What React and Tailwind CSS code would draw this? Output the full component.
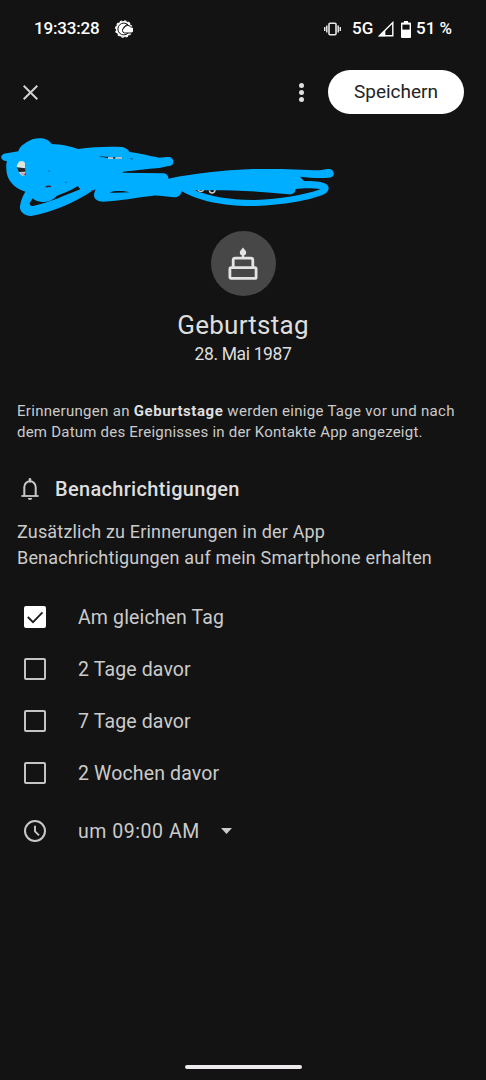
import { useState } from 'react';

const OPTIONS = [
  { id: 'same-day', label: 'Am gleichen Tag' },
  { id: 'two-days', label: '2 Tage davor' },
  { id: 'seven-days', label: '7 Tage davor' },
  { id: 'two-weeks', label: '2 Wochen davor' },
];

const WeatherIcon = () => (
  <svg className="ml-[15px] h-[18px] w-[18px]" viewBox="0 0 18 18" fill="none">
    <circle cx="8.8" cy="9" r="8" fill="#fff" />
    <circle cx="8.8" cy="9" r="8.2" stroke="#fff" strokeWidth="1.2" strokeDasharray="2.3 2" />
    <circle cx="8.8" cy="9" r="5.9" stroke="#131313" strokeWidth="1" />
    <path d="M12.500 4.200C9.500 5.500 8 8 8 10.500" stroke="#131313" strokeWidth="1" />
    <path
      d="M9.500 13a2.700 2.700 0 0 1-.2-5.200 3.700 3.700 0 0 1 6.300-1 3.100 3.100 0 0 1 .6 6.200Z"
      fill="#fff"
      stroke="#131313"
      strokeWidth="1"
    />
  </svg>
);

const VibrateIcon = () => (
  <svg className="h-[14px] w-[17px]" viewBox="0 0 17 14" fill="none" stroke="#e8e8e8">
    <rect x="5" y="1.3" width="7" height="11.4" rx="1" strokeWidth="1.6" />
    <path d="M2.8 3.5v7M14.2 3.5v7M.7 5v4M16.3 5v4" strokeWidth="1.5" />
  </svg>
);

const SignalIcon = () => (
  <svg className="ml-[4px] h-[16px] w-[16px]" viewBox="0 0 16 16">
    <path d="M1.5 14.7 14.8 1.6v13.1Z" fill="none" stroke="#fff" strokeWidth="1.4" />
    <path d="M.5 15.3 7.3 8.6v6.7Z" fill="#fff" />
  </svg>
);

const BatteryIcon = () => (
  <svg className="ml-[7px] h-[17px] w-[10px]" viewBox="0 0 10 17">
    <path d="M3 0h4v1.500h2a1 1 0 0 1 1 1V16a1 1 0 0 1-1 1H1a1 1 0 0 1-1-1V2.500a1 1 0 0 1 1-1h2Z" fill="#fff" />
    <path d="M1.4 3.6h7.2v5H1.4Z" fill="#131313" />
  </svg>
);

const CakeIcon = () => (
  <svg className="h-[34px] w-[30px]" viewBox="0 0 30 34" fill="none" stroke="#e3e3e3">
    <path d="M15 5v6" strokeWidth="2.4" />
    <path d="M15 .5c1.6 2 3.200 3.4 3.200 5a3.200 3 0 0 1-6.400 0c0-1.600 1.600-3 3.200-5Z" fill="#e3e3e3" stroke="none" />
    <path d="M5.200 20.500v-7.400a2 2 0 0 1 2-2h15.600a2 2 0 0 1 2 2v7.400" strokeWidth="2.800" />
    <rect x="1.900" y="20.700" width="26.200" height="10.700" rx="1.200" strokeWidth="2.800" />
  </svg>
);

const BellIcon = () => (
  <svg className="h-[22px] w-[18px]" viewBox="0 0 18 22" fill="none" stroke="#c8c8c8">
    <path d="M3.300 18V9a5.700 5.700 0 0 1 11.400 0v9" strokeWidth="2" />
    <path d="M.4 18h17.200" strokeWidth="1.800" />
    <path d="M9 1.300v2" strokeWidth="2.600" strokeLinecap="round" />
    <path d="M6.800 20h4.400a2.200 2 0 0 1-4.400 0Z" fill="#c8c8c8" stroke="none" />
  </svg>
);

const ClockIcon = () => (
  <svg className="h-6 w-6" viewBox="0 0 24 24" fill="none" stroke="#c8c8c8">
    <circle cx="12" cy="12" r="10" strokeWidth="2" />
    <path d="M12 6.800v5.600l4 4" strokeWidth="1.900" />
  </svg>
);

const Checkbox = ({ checked }) =>
  checked ? (
    <span className="flex h-[22px] w-[22px] items-center justify-center rounded-[2px] bg-white">
      <svg className="h-[22px] w-[22px]" viewBox="0 0 22 22" fill="none">
        <path d="m3.800 11 5.200 5.100L18.500 6.300" stroke="#1a1a1a" strokeWidth="1.800" />
      </svg>
    </span>
  ) : (
    <span className="h-[22px] w-[22px] rounded-[2px] border-2 border-[#c4c4c4]" />
  );

// Account row, hidden behind the marker strokes
const AccountRow = () => (
  <svg className="block h-[90px] w-[340px]" viewBox="0 0 1020 270">
    <g fill="#00aeff">
      <path d="M20 70 55 64C60 45 82 36 97 28C120 21 145 24 155 42C185 43 215 50 235 57C280 50 330 49 367 51C380 54 386 61 389 66C420 70 455 79 478 83L500 81C513 79 520 86 520 95C520 104 514 108 505 108L478 114C440 117 405 121 370 125L367 128L488 130C499 130 506 137 505 146C590 129 670 121 745 118C800 115 900 118 960 121L982 117C995 116 1001 122 1001 131C1001 139 995 143 986 143C955 145 930 143 900 140C904 144 910 149 911 153C940 152 966 154 978 162C990 169 988 184 974 192C930 211 850 225 765 228C680 230 595 214 546 184C541 197 535 202 522 202C500 201 480 196 460 197C410 202 355 213 310 215C293 215 284 208 282 198C282 190 284 183 288 178L277 182C225 216 160 246 93 258C70 257 58 243 60 228C63 210 69 196 76 185C38 174 18 145 19 115C18 106 19 99 21 94C8 92 2 86 4 79C7 73 13 71 20 70Z" />
    </g>
    <g fill="#131313">
      <path d="M98 205 89 219C89 228 95 229 102 227C150 218 196 195 241 178L233 168C215 181 190 190 171 197C158 211 144 216 126 216C113 215 104 212 98 205Z" />
      <path d="M329 188C345 181 370 183 389 187C367 188 347 189 329 188Z" />
      <path d="M584 181C680 179 770 183 865 193C879 195 885 188 887 177C910 174 945 174 961 178C910 196 840 207 765 210C690 211 625 198 584 181Z" />
    </g>
    <path d="M57 95C65 91 72 93 75 99V135L67 137C56 130 48 114 51 105Z" fill="#dce6df" />
    <path d="M50 112 76 115V125L56 126Z" fill="#262626" />
    <path d="M57 127 77 128V135L69 137Z" fill="#c5a7ac" />
    <path d="M72 133 78 130V136Z" fill="#900026" />
    <path d="M297 79 368 83 365 87 320 84Z" fill="#102838" />
    <path d="M324 84h15M346 84h20" stroke="#d8e5eb" strokeWidth="5" />
    <path d="m300 79 7 2M391 86l8 1M145 122l5 3M195 158l5-2" stroke="#145a7c" strokeWidth="3" />
    <path d="M137 171q9-4 16-1" stroke="#4b1420" strokeWidth="4" fill="none" />
    <path d="m271 183 10-3v4Z" fill="#b40022" />
    <path d="M594 181q9 7 17 0M628 181q1 8 9 8 8-1 8-9" stroke="#cfcfcf" strokeWidth="4" fill="none" />
  </svg>
);

const App = () => {
  const [selected, setSelected] = useState(['same-day']);

  const toggle = (id) => {
    setSelected((prev) =>
      prev.includes(id) ? prev.filter((item) => item !== id) : [...prev, id]
    );
  };

  return (
    <div className="flex h-[1080px] w-[486px] flex-col overflow-hidden bg-[#131313] font-[Roboto,sans-serif] text-[#dedede] whitespace-nowrap">
      {/* Status bar */}
      <div className="flex h-[58px] items-center pr-[35px] pl-[34px] text-[17px] font-medium text-white">
        <span className="w-[66px] tracking-[-0.01em]">19:33:28</span>
        <WeatherIcon />
        <div className="ml-auto flex items-center">
          <VibrateIcon />
          <span className="ml-[11px] w-[22px]">5G</span>
          <SignalIcon />
          <BatteryIcon />
          <span className="ml-[5px] w-[35px]">51 %</span>
        </div>
      </div>

      {/* Toolbar */}
      <div className="flex h-[72px] items-center pr-[22px] pl-[23px] pb-1">
        <button aria-label="Schließen">
          <svg className="h-[15px] w-[15px]" viewBox="0 0 15 15" stroke="#d0d0d0" strokeWidth="2">
            <path d="m.7.7 13.600 13.600M14.300.7.7 14.300" />
          </svg>
        </button>
        <button aria-label="Weitere Optionen" className="ml-auto flex flex-col gap-[2px]">
          <span className="h-[5px] w-[5px] rounded-full bg-[#dedede]" />
          <span className="h-[5px] w-[5px] rounded-full bg-[#dedede]" />
          <span className="h-[5px] w-[5px] rounded-full bg-[#dedede]" />
        </button>
        <button className="ml-6 h-11 w-[136px] rounded-full bg-white text-[19px] text-[#242424]">
          Speichern
        </button>
      </div>

      <AccountRow />

      {/* Event */}
      <div className="flex flex-col items-center pt-[11px]">
        <div className="flex h-[65px] w-[65px] items-center justify-center rounded-full bg-[#474747]">
          <CakeIcon />
        </div>
        <h1 className="mt-[13px] text-[26px] leading-8 tracking-[0.01em]">Geburtstag</h1>
        <p className="text-[17.500px] leading-[26px] tracking-[-0.02em]">28. Mai 1987</p>
      </div>

      <p className="mt-[34px] pl-[17px] text-[15px] leading-[20.500px] tracking-[0.015em] text-[#cbcbcb]">
        <span className="tracking-[0.020em]">
          Erinnerungen an <b className="font-bold tracking-[0.036em] text-[#dedede]">Geburtstage</b> werden einige Tage vor und nach
        </span>
        <br />
        dem Datum des Ereignisses in der Kontakte App angezeigt.
      </p>

      {/* Notifications */}
      <div className="mt-[33px] flex h-[28px] items-center pl-[21px]">
        <BellIcon />
        <h2 className="ml-4 text-[20px] font-medium tracking-[0.016em]">Benachrichtigungen</h2>
      </div>
      <p className="mt-4 pl-[17px] text-[18px] leading-[26px] tracking-[0.01em] text-[#cbcbcb]">
        Zusätzlich zu Erinnerungen in der App
        <br />
        Benachrichtigungen auf mein Smartphone erhalten
      </p>

      <div className="mt-5 flex flex-col">
        {OPTIONS.map((option) => (
          <button
            key={option.id}
            onClick={() => toggle(option.id)}
            className="flex h-[52px] items-center pl-6 text-[19.500px] text-[#cbcbcb]"
          >
            <Checkbox checked={selected.includes(option.id)} />
            <span className="ml-8 pt-px tracking-[0.007em]">{option.label}</span>
          </button>
        ))}
      </div>

      <button className="mt-[6px] flex h-[52px] items-center pl-[23px] text-[19.500px] text-[#cbcbcb]">
        <ClockIcon />
        <span className="ml-[31px] w-[122px] pt-px text-left tracking-[0.028em]">um 09:00 AM</span>
        <svg className="ml-[21px] h-[6px] w-[11px]" viewBox="0 0 11 6" fill="#cbcbcb">
          <path d="M0 0h11L5.500 6Z" />
        </svg>
      </button>

      <div className="mx-auto mt-auto mb-[11px] h-1 w-[117px] rounded-full bg-[#eee9ed]" />
    </div>
  );
};

export default App;
